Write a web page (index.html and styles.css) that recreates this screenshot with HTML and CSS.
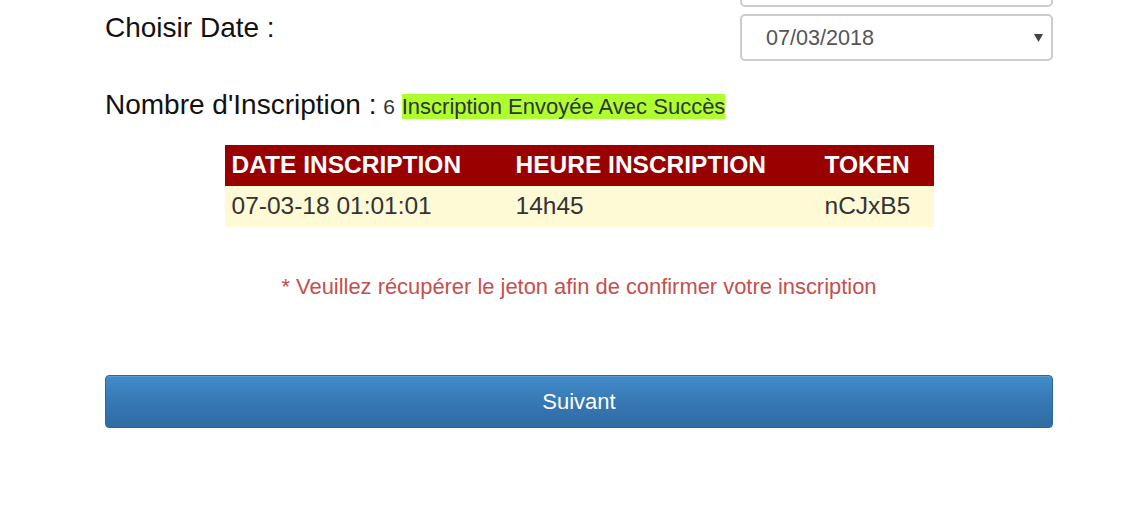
FILE: index.html
```html
<!DOCTYPE html>
<html lang="fr">
<head>
<meta charset="utf-8">
<title>Inscription</title>
<link rel="stylesheet" href="styles.css">
</head>
<body>
<div class="page">
  <div class="date-row">
    <div class="date-label">Choisir Date :</div>
    <div class="select-col">
      <div class="fake-select fake-select-top"></div>
      <div class="fake-select">
        <span class="select-value">07/03/2018</span>
        <svg class="select-arrow" width="9" height="8" viewBox="0 0 9 8"><path d="M0 0 L9 0 L4.5 8 Z" fill="#444"/></svg>
      </div>
    </div>
  </div>

  <div class="count-line">Nombre d'Inscription : <span class="count-num">6</span> <span class="success">Inscription Envoyée Avec Succès</span></div>

  <table class="result-table">
    <thead>
      <tr>
        <th class="col-date">DATE INSCRIPTION</th>
        <th class="col-time">HEURE INSCRIPTION</th>
        <th class="col-token">TOKEN</th>
      </tr>
    </thead>
    <tbody>
      <tr>
        <td>07-03-18 01:01:01</td>
        <td>14h45</td>
        <td>nCJxB5</td>
      </tr>
    </tbody>
  </table>

  <p class="notice">* Veuillez récupérer le jeton afin de confirmer votre inscription</p>

  <button class="btn-next" type="button">Suivant</button>
</div>
</body>
</html>
```

FILE: styles.css
```css
html, body {
  margin: 0;
  padding: 0;
  background: #ffffff;
}

body {
  font-family: "Liberation Sans", Arial, sans-serif;
  color: #111;
  overflow: hidden;
}

.page {
  width: 948px;
  margin-left: 105px;
}

.date-row {
  display: grid;
  grid-template-columns: 635px 313px;
  margin-top: -40px;
}

.date-label {
  font-size: 28px;
  line-height: 32px;
  margin-top: 52px;
  color: #111;
}

.select-col {
  display: flex;
  flex-direction: column;
  gap: 7px;
}

.fake-select {
  box-sizing: border-box;
  height: 47px;
  border: 2px solid #cccccc;
  border-radius: 5px;
  background: #fff;
  display: flex;
  align-items: center;
  justify-content: space-between;
  padding: 0 8px 0 24px;
}

.select-value {
  font-size: 21.6px;
  color: #555555;
}

.select-arrow {
  display: block;
}

.count-line {
  margin-top: 28px;
  font-size: 28px;
  line-height: 32px;
  color: #111;
}

.count-num {
  font-size: 21px;
  color: #333;
  margin-left: -1px;
  margin-right: -1px;
}

.success {
  font-size: 22px;
  color: #333;
  background: #adff2f;
}

.result-table {
  margin: 22px auto 0;
  width: 709px;
  border-collapse: collapse;
  table-layout: fixed;
  font-size: 24.5px;
}

.result-table th,
.result-table td {
  text-align: left;
  padding: 6px 4px 8px 7px;
  line-height: 27px;
  white-space: nowrap;
}

.result-table th {
  background: #990000;
  color: #ffffff;
  font-weight: bold;
}

.result-table td {
  background: #fffad6;
  color: #333333;
}

.col-date { width: 273px; }
.col-time { width: 298px; }
.col-token { width: 105px; }

.notice {
  margin: 47px 0 0;
  text-align: center;
  font-size: 21.9px;
  line-height: 25px;
  color: #c4504e;
}

.btn-next {
  display: block;
  box-sizing: border-box;
  width: 948px;
  height: 53px;
  margin-top: 76px;
  border: 1px solid #2b669a;
  border-radius: 4px;
  background: linear-gradient(to bottom, #428bca 0%, #3575b0 60%, #2f6ca3 100%);
  color: #ffffff;
  font-family: "Liberation Sans", Arial, sans-serif;
  font-size: 22px;
  line-height: 24px;
  padding: 0;
  box-shadow: inset 0 1px 0 rgba(255,255,255,0.15), 0 1px 1px rgba(0,0,0,0.075);
}
```
